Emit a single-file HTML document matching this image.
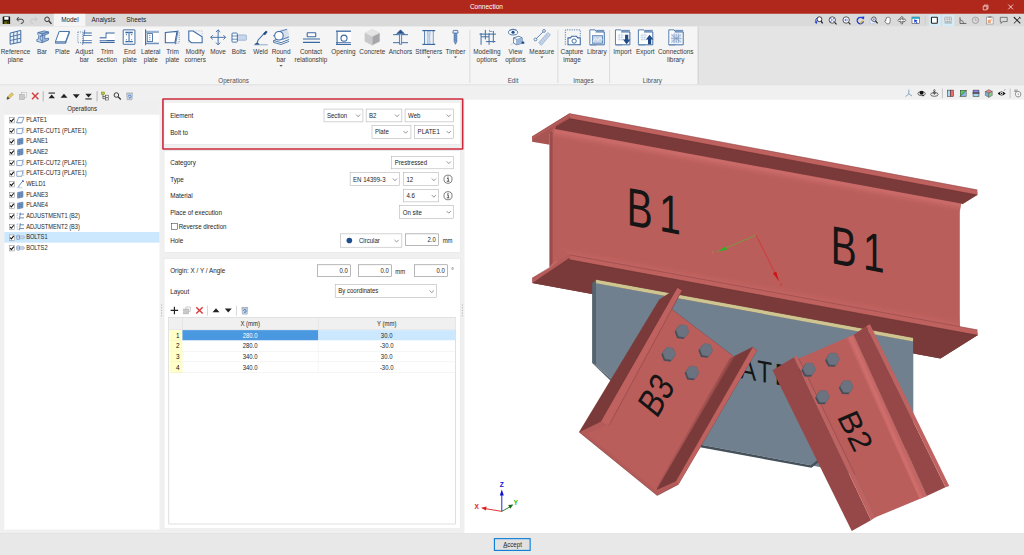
<!DOCTYPE html>
<html lang="en"><head><meta charset="utf-8"><title>Connection</title>
<style>
html,body{margin:0;padding:0;background:#f0f0f0;overflow:hidden;width:1024px;height:555px}
#root{position:absolute;left:0;top:0;width:1920px;height:1041px;transform:scale(0.533333,0.533333);transform-origin:0 0;
 font-family:"Liberation Sans",sans-serif;font-size:12px;color:#1a1a1a;background:#f0f0f0;overflow:hidden}
#root div{position:absolute;box-sizing:border-box;white-space:nowrap}
#root svg{position:absolute;overflow:visible}
.t{color:#1e1e1e}
.combo{background:#fff;border:1px solid #adadad}
.inp{background:#fff;border:1px solid #7a7a7a}
.panel{background:#fff;border:1px solid #dedede}
</style></head>
<body>
<div id="root">
<div style="left:0.0px;top:0.0px;width:1920.0px;height:26.0px;background:#b0281c"></div>
<div class="t" style="left:712.0px;top:3.0px;width:400px;height:20px;line-height:20px;text-align:center;transform:scaleX(1.02);transform-origin:50% 50%;color:#fff">Connection</div>
<svg style="left:1840px;top:5px" width="70" height="16" viewBox="0 0 70 16"><path d="M3.5 6.5h7v7h-7z M5.5 6.5v-2h7v7h-2" fill="none" stroke="#fff" stroke-width="1.2"/><path d="M50.5 3.5l9 9 M59.5 3.5l-9 9" stroke="#fff" stroke-width="1.4"/></svg>
<div style="left:0.0px;top:26.0px;width:1920.0px;height:24.0px;background:#dadada"></div>
<div style="left:101.0px;top:26.0px;width:59.0px;height:25.0px;background:#f5f5f5"></div>
<div class="t" style="left:-69.0px;top:28.0px;width:400px;height:20px;line-height:20px;text-align:center;transform:scaleX(1.0);transform-origin:50% 50%;">Model</div>
<div class="t" style="left:-6.0px;top:28.0px;width:400px;height:20px;line-height:20px;text-align:center;transform:scaleX(1.0);transform-origin:50% 50%;">Analysis</div>
<div class="t" style="left:55.5px;top:28.0px;width:400px;height:20px;line-height:20px;text-align:center;transform:scaleX(1.0);transform-origin:50% 50%;">Sheets</div>
<div style="left:0.0px;top:48.5px;width:1920.0px;height:110.5px;background:#e4e4e4"></div>
<div style="left:0.0px;top:50.0px;width:1309.0px;height:109.0px;background:#f5f5f5"></div>
<div style="left:0.0px;top:158.0px;width:1920.0px;height:1.5px;background:#e2e2e2"></div>
<div style="left:880.0px;top:56.0px;width:1.5px;height:100.0px;background:#dcdcdc"></div>
<div style="left:1045.0px;top:56.0px;width:1.5px;height:100.0px;background:#dcdcdc"></div>
<div style="left:1142.0px;top:56.0px;width:1.5px;height:100.0px;background:#dcdcdc"></div>
<div style="left:1308.0px;top:50.0px;width:1.5px;height:108.0px;background:#cfcfcf"></div>
<svg style="left:13.0px;top:54px" width="32" height="32" viewBox="0 0 32 32"><path d="M6 8L26 3V25L6 29Z" fill="#e9eff7" stroke="#3a68a2" stroke-width="1.8" /><path d="M12.7 6.3V27.6 M19.3 4.7V26.4 M6 15L26 10.3 M6 22L26 17.6" fill="none" stroke="#3a68a2" stroke-width="1.6" /></svg>
<div class="t" style="left:-31.0px;top:87.0px;width:120px;height:20px;line-height:20px;text-align:center;transform:scaleX(1.0);transform-origin:50% 50%;color:#3a3a3a">Reference</div>
<div class="t" style="left:-31.0px;top:102.5px;width:120px;height:20px;line-height:20px;text-align:center;transform:scaleX(1.0);transform-origin:50% 50%;color:#3a3a3a">plane</div>
<svg style="left:62.8px;top:54px" width="32" height="32" viewBox="0 0 32 32"><path d="M8 7L20 4L28 6L16 9.5Z" fill="#9db6d6" stroke="#3a68a2" stroke-width="1.4" /><path d="M16 9.5L28 6V9L21 11.5V19L28 17.5V21L16 26Z" fill="#9db6d6" stroke="#3a68a2" stroke-width="1.4" /><path d="M8 7L16 9.5V13L12.5 14V21L16 22V26L6 23.5V20L9.5 19V12.5L8 11Z" fill="#c9d7ea" stroke="#3a68a2" stroke-width="1.4" /><path d="M12.5 14L21 11.5" fill="none" stroke="#3a68a2" stroke-width="1.2" /></svg>
<div class="t" style="left:18.8px;top:87.0px;width:120px;height:20px;line-height:20px;text-align:center;transform:scaleX(1.0);transform-origin:50% 50%;color:#3a3a3a">Bar</div>
<svg style="left:101.0px;top:54px" width="32" height="32" viewBox="0 0 32 32"><path d="M10 5H29L22 24H3Z" fill="#fff" stroke="#3a68a2" stroke-width="1.8" /><path d="M3 24V27H22V24 M22 27L29 8V5" fill="#9db6d6" stroke="#3a68a2" stroke-width="1.5" /></svg>
<div class="t" style="left:57.0px;top:87.0px;width:120px;height:20px;line-height:20px;text-align:center;transform:scaleX(1.0);transform-origin:50% 50%;color:#3a3a3a">Plate</div>
<svg style="left:142.0px;top:54px" width="32" height="32" viewBox="0 0 32 32"><path d="M4 6H13V26H4Z" fill="none" stroke="#3a68a2" stroke-width="1.3" stroke-dasharray="2 2"/><path d="M14 8H30 M14 13H30 M14 22H30 M14 26H30" fill="none" stroke="#3a68a2" stroke-width="2" /><path d="M17 2L13 30" fill="none" stroke="#3a68a2" stroke-width="1.6" /><rect x="15" y="13.5" width="15" height="8" fill="#fff"/></svg>
<div class="t" style="left:98.0px;top:87.0px;width:120px;height:20px;line-height:20px;text-align:center;transform:scaleX(1.0);transform-origin:50% 50%;color:#3a3a3a">Adjust</div>
<div class="t" style="left:98.0px;top:102.5px;width:120px;height:20px;line-height:20px;text-align:center;transform:scaleX(1.0);transform-origin:50% 50%;color:#3a3a3a">bar</div>
<svg style="left:184.6px;top:54px" width="32" height="32" viewBox="0 0 32 32"><path d="M2 17H14V8H30" fill="none" stroke="#3a68a2" stroke-width="2" /><path d="M2 22H30 M2 25.5H30" fill="none" stroke="#3a68a2" stroke-width="2" /><rect x="15" y="10" width="15" height="11" fill="#fff"/><rect x="3" y="18.5" width="12" height="3" fill="#fff"/></svg>
<div class="t" style="left:140.6px;top:87.0px;width:120px;height:20px;line-height:20px;text-align:center;transform:scaleX(1.0);transform-origin:50% 50%;color:#3a3a3a">Trim</div>
<div class="t" style="left:140.6px;top:102.5px;width:120px;height:20px;line-height:20px;text-align:center;transform:scaleX(1.0);transform-origin:50% 50%;color:#3a3a3a">section</div>
<svg style="left:227.3px;top:54px" width="32" height="32" viewBox="0 0 32 32"><rect x="4" y="2" width="22" height="27" rx="0.5" fill="#fff" stroke="#3a68a2" stroke-width="1.8"/><path d="M8 7H22 M8 24H22" fill="none" stroke="#3a68a2" stroke-width="2.6" /><path d="M15 7V24" fill="none" stroke="#7f9cc4" stroke-width="3" /><circle cx="10" cy="11" r="1.1" fill="#3a68a2"/><circle cx="20" cy="11" r="1.1" fill="#3a68a2"/><circle cx="10" cy="20.5" r="1.1" fill="#3a68a2"/><circle cx="20" cy="20.5" r="1.1" fill="#3a68a2"/></svg>
<div class="t" style="left:183.3px;top:87.0px;width:120px;height:20px;line-height:20px;text-align:center;transform:scaleX(1.0);transform-origin:50% 50%;color:#3a3a3a">End</div>
<div class="t" style="left:183.3px;top:102.5px;width:120px;height:20px;line-height:20px;text-align:center;transform:scaleX(1.0);transform-origin:50% 50%;color:#3a3a3a">plate</div>
<svg style="left:266.7px;top:54px" width="32" height="32" viewBox="0 0 32 32"><rect x="1" y="1" width="30" height="30" fill="#fff"/><path d="M6 1V31" fill="none" stroke="#3a68a2" stroke-width="2" /><path d="M6 6H31 M6 27H31" fill="none" stroke="#3a68a2" stroke-width="2" /><path d="M7 4H31 M7 29H31" fill="none" stroke="#9db6d6" stroke-width="1" /><rect x="9" y="9" width="10" height="15" fill="#fff" stroke="#3a68a2" stroke-width="1.6"/><circle cx="14" cy="12.5" r="1.1" fill="#3a68a2"/><circle cx="14" cy="16.5" r="1.1" fill="#3a68a2"/><circle cx="14" cy="20.5" r="1.1" fill="#3a68a2"/></svg>
<div class="t" style="left:222.7px;top:87.0px;width:120px;height:20px;line-height:20px;text-align:center;transform:scaleX(1.0);transform-origin:50% 50%;color:#3a3a3a">Lateral</div>
<div class="t" style="left:222.7px;top:102.5px;width:120px;height:20px;line-height:20px;text-align:center;transform:scaleX(1.0);transform-origin:50% 50%;color:#3a3a3a">plate</div>
<svg style="left:307.4px;top:54px" width="32" height="32" viewBox="0 0 32 32"><path d="M3 7L25 5L21 26H3Z" fill="#fff" stroke="#3a68a2" stroke-width="2" /><path d="M27 3L22 29" fill="none" stroke="#3a68a2" stroke-width="1.5" /><path d="M29 7V26" fill="none" stroke="#3a68a2" stroke-width="1.3" stroke-dasharray="2 2"/><path d="M22 27H29" fill="none" stroke="#3a68a2" stroke-width="1.2" stroke-dasharray="2 2"/></svg>
<div class="t" style="left:263.4px;top:87.0px;width:120px;height:20px;line-height:20px;text-align:center;transform:scaleX(1.0);transform-origin:50% 50%;color:#3a3a3a">Trim</div>
<div class="t" style="left:263.4px;top:102.5px;width:120px;height:20px;line-height:20px;text-align:center;transform:scaleX(1.0);transform-origin:50% 50%;color:#3a3a3a">plate</div>
<svg style="left:350.0px;top:54px" width="32" height="32" viewBox="0 0 32 32"><path d="M4 4H12L29 15V26H9L4 22Z" fill="#fff" stroke="#3a68a2" stroke-width="2" /><path d="M12 4H29V15" fill="none" stroke="#7f9cc4" stroke-width="1" stroke-dasharray="1.5 1.5"/><path d="M4 22V26H9" fill="none" stroke="#7f9cc4" stroke-width="1" stroke-dasharray="1.5 1.5"/></svg>
<div class="t" style="left:306.0px;top:87.0px;width:120px;height:20px;line-height:20px;text-align:center;transform:scaleX(1.0);transform-origin:50% 50%;color:#3a3a3a">Modify</div>
<div class="t" style="left:306.0px;top:102.5px;width:120px;height:20px;line-height:20px;text-align:center;transform:scaleX(1.0);transform-origin:50% 50%;color:#3a3a3a">corners</div>
<svg style="left:392.8px;top:54px" width="32" height="32" viewBox="0 0 32 32"><path d="M16 2V30 M2 16H30 M12 6L16 2L20 6 M12 26L16 30L20 26 M6 12L2 16L6 20 M26 12L30 16L26 20" fill="none" stroke="#3a68a2" stroke-width="1.7" /></svg>
<div class="t" style="left:348.8px;top:87.0px;width:120px;height:20px;line-height:20px;text-align:center;transform:scaleX(1.0);transform-origin:50% 50%;color:#3a3a3a">Move</div>
<svg style="left:431.7px;top:54px" width="32" height="32" viewBox="0 0 32 32"><rect x="13" y="11.5" width="17" height="10" rx="1.5" fill="#c9d7ea" stroke="#8aa5cb" stroke-width="1.3"/><rect x="3" y="8" width="10" height="17" rx="1.5" fill="#fff" stroke="#3a68a2" stroke-width="1.7"/><path d="M3 13.5H13 M3 19.5H13" fill="none" stroke="#3a68a2" stroke-width="1.4" /></svg>
<div class="t" style="left:387.7px;top:87.0px;width:120px;height:20px;line-height:20px;text-align:center;transform:scaleX(1.0);transform-origin:50% 50%;color:#3a3a3a">Bolts</div>
<svg style="left:472.4px;top:54px" width="32" height="32" viewBox="0 0 32 32"><path d="M22 9L27 4L29 6L24.5 11.5Z" fill="#1f4a86" stroke="#1f4a86" stroke-width="1.4" /><path d="M23 9L12 21L10 27" fill="none" stroke="#3a68a2" stroke-width="1.9" /><path d="M4 30H30" fill="none" stroke="#7f9cc4" stroke-width="1.6" /><path d="M6 29Q10 24 14 29Z" fill="#1f4a86" stroke="#1f4a86" stroke-width="1" /></svg>
<div class="t" style="left:428.4px;top:87.0px;width:120px;height:20px;line-height:20px;text-align:center;transform:scaleX(1.0);transform-origin:50% 50%;color:#3a3a3a">Weld</div>
<svg style="left:511.0px;top:54px" width="32" height="32" viewBox="0 0 32 32"><path d="M2 22L16 26L31 20 M2 25.5L16 29.5L31 23.5 M2 22V25.5" fill="none" stroke="#3a68a2" stroke-width="1.6" /><path d="M2 22L15 17" fill="none" stroke="#3a68a2" stroke-width="1.4" /><path d="M13 2L28 0L31 9L30 18L16 22Z" fill="#d6e0ee"/><circle cx="12" cy="13" r="8" fill="#fff" stroke="#3a68a2" stroke-width="2"/><path d="M1 13H4" fill="none" stroke="#3a68a2" stroke-width="1.5" /><path d="M14 5L27 1 M18 20L31 15" fill="none" stroke="#3a68a2" stroke-width="1.5" /></svg>
<div class="t" style="left:467.0px;top:87.0px;width:120px;height:20px;line-height:20px;text-align:center;transform:scaleX(1.0);transform-origin:50% 50%;color:#3a3a3a">Round</div>
<div class="t" style="left:467.0px;top:102.5px;width:120px;height:20px;line-height:20px;text-align:center;transform:scaleX(1.0);transform-origin:50% 50%;color:#3a3a3a">bar</div>
<svg style="left:523.0px;top:121px" width="8" height="5" viewBox="0 0 8 5"><path d="M1 1l3 3 3-3z" fill="#555"/></svg>
<svg style="left:567.0px;top:54px" width="32" height="32" viewBox="0 0 32 32"><rect x="9" y="7.5" width="16" height="7.5" rx="1" fill="#fff" stroke="#3a68a2" stroke-width="2"/><path d="M1 19H33 M1 25.5H33" fill="none" stroke="#3a68a2" stroke-width="2" /></svg>
<div class="t" style="left:523.0px;top:87.0px;width:120px;height:20px;line-height:20px;text-align:center;transform:scaleX(1.0);transform-origin:50% 50%;color:#3a3a3a">Contact</div>
<div class="t" style="left:523.0px;top:102.5px;width:120px;height:20px;line-height:20px;text-align:center;transform:scaleX(1.0);transform-origin:50% 50%;color:#3a3a3a">relationship</div>
<svg style="left:628.0px;top:54px" width="32" height="32" viewBox="0 0 32 32"><rect x="3" y="5" width="27" height="24" fill="#fff"/><path d="M2 4.5H30" fill="none" stroke="#3a68a2" stroke-width="2.4" /><path d="M4 5V29 M2 26H30 M2 29.5H30" fill="none" stroke="#3a68a2" stroke-width="2" /><circle cx="17" cy="17.5" r="5.7" fill="#fff" stroke="#3a68a2" stroke-width="2"/></svg>
<div class="t" style="left:584.0px;top:87.0px;width:120px;height:20px;line-height:20px;text-align:center;transform:scaleX(1.0);transform-origin:50% 50%;color:#3a3a3a">Opening</div>
<svg style="left:682.0px;top:54px" width="32" height="32" viewBox="0 0 32 32"><path d="M16 1L30 8L16 15L2 8Z" fill="#e4e4e4" stroke="#cfcfcf" stroke-width="0.6"/><path d="M2 8L16 15V31L2 24Z" fill="#c9c9cc" stroke="#cfcfcf" stroke-width="0.6"/><path d="M30 8L16 15V31L30 24Z" fill="#a6a6aa" stroke="#cfcfcf" stroke-width="0.6"/></svg>
<div class="t" style="left:638.0px;top:87.0px;width:120px;height:20px;line-height:20px;text-align:center;transform:scaleX(1.0);transform-origin:50% 50%;color:#3a3a3a">Concrete</div>
<svg style="left:735.0px;top:54px" width="32" height="32" viewBox="0 0 32 32"><path d="M16 2L23 9H9Z" fill="#1f4a86" stroke="#1f4a86" stroke-width="1" /><path d="M2 11H30 M2 26H30" fill="none" stroke="#3a68a2" stroke-width="1.8" /><path d="M14 11V29H18V11" fill="#e9eff7" stroke="#3a68a2" stroke-width="1.5" /><path d="M8 11L16 4L24 11" fill="none" stroke="#3a68a2" stroke-width="1.6" /></svg>
<div class="t" style="left:691.0px;top:87.0px;width:120px;height:20px;line-height:20px;text-align:center;transform:scaleX(1.0);transform-origin:50% 50%;color:#3a3a3a">Anchors</div>
<svg style="left:788.0px;top:54px" width="32" height="32" viewBox="0 0 32 32"><path d="M4 3.5H28 M4 29H28" fill="none" stroke="#3a68a2" stroke-width="2.4" /><path d="M8 4V29 M24 4V29" fill="none" stroke="#3a68a2" stroke-width="1.6" /><path d="M13 5Q15.5 16 13 28H19Q16.5 16 19 5Z" fill="#c9d7ea" stroke="#7f9cc4" stroke-width="1" /><rect x="8.8" y="5" width="3.6" height="23" fill="#e9eff7"/><rect x="19.6" y="5" width="3.6" height="23" fill="#e9eff7"/></svg>
<div class="t" style="left:744.0px;top:87.0px;width:120px;height:20px;line-height:20px;text-align:center;transform:scaleX(1.0);transform-origin:50% 50%;color:#3a3a3a">Stiffeners</div>
<svg style="left:800.0px;top:105px" width="8" height="5" viewBox="0 0 8 5"><path d="M1 1l3 3 3-3z" fill="#555"/></svg>
<svg style="left:838.0px;top:54px" width="32" height="32" viewBox="0 0 32 32"><path d="M12 3H20L21 8H11Z" fill="#e9eff7" stroke="#3a68a2" stroke-width="1.5" /><path d="M13.5 9H18.5V24L16 29L13.5 24Z" fill="#7f9cc4" stroke="#3a68a2" stroke-width="1.2" /><path d="M13.5 12L18.5 14 M13.5 16L18.5 18 M13.5 20L18.5 22" fill="none" stroke="#3a68a2" stroke-width="1" /></svg>
<div class="t" style="left:794.0px;top:87.0px;width:120px;height:20px;line-height:20px;text-align:center;transform:scaleX(1.0);transform-origin:50% 50%;color:#3a3a3a">Timber</div>
<svg style="left:850.0px;top:105px" width="8" height="5" viewBox="0 0 8 5"><path d="M1 1l3 3 3-3z" fill="#555"/></svg>
<svg style="left:897.0px;top:54px" width="32" height="32" viewBox="0 0 32 32"><path d="M5 8V30 M5 15H20 M20 8V30 M13 2V20 M2 10H33 M28 4V26 M14 24H32" fill="none" stroke="#3a68a2" stroke-width="1.8" /><path d="M21 2V5H26" fill="none" stroke="#3a68a2" stroke-width="1.2" /></svg>
<div class="t" style="left:853.0px;top:87.0px;width:120px;height:20px;line-height:20px;text-align:center;transform:scaleX(1.0);transform-origin:50% 50%;color:#3a3a3a">Modelling</div>
<div class="t" style="left:853.0px;top:102.5px;width:120px;height:20px;line-height:20px;text-align:center;transform:scaleX(1.0);transform-origin:50% 50%;color:#3a3a3a">options</div>
<svg style="left:950.5px;top:54px" width="32" height="32" viewBox="0 0 32 32"><ellipse cx="11" cy="6.5" rx="8.5" ry="5" fill="#fff" stroke="#3a68a2" stroke-width="1.6"/><circle cx="11" cy="6.5" r="3" fill="#1f4a86"/><path d="M4 3Q11 -2 18 3" fill="none" stroke="#3a68a2" stroke-width="1.2" /><path d="M12 17L22 14L28 17V27L18 30L12 27Z" fill="#fff" stroke="#3a68a2" stroke-width="1.5" /><path d="M18 20V30 M12 17L18 20L28 17" fill="none" stroke="#3a68a2" stroke-width="1.3" /><path d="M18 20L28 17V27L18 30Z" fill="#9db6d6"/><rect x="27" y="24" width="5" height="4" fill="#1f4a86"/><path d="M12 27L6 30" fill="none" stroke="#bbb" stroke-width="1" /></svg>
<div class="t" style="left:906.5px;top:87.0px;width:120px;height:20px;line-height:20px;text-align:center;transform:scaleX(1.0);transform-origin:50% 50%;color:#3a3a3a">View</div>
<div class="t" style="left:906.5px;top:102.5px;width:120px;height:20px;line-height:20px;text-align:center;transform:scaleX(1.0);transform-origin:50% 50%;color:#3a3a3a">options</div>
<svg style="left:999.8px;top:54px" width="32" height="32" viewBox="0 0 32 32"><path d="M10 26L27 7L32 11L15 31Z" fill="#c9d7ea" stroke="#8aa5cb" stroke-width="1.3" /><path d="M13 25L15 27 M16 22L18 24 M19 19L21 21 M22 15L24 17 M25 12L27 14" fill="none" stroke="#6f8fbd" stroke-width="1" /><path d="M4 20L20 4" fill="none" stroke="#3a68a2" stroke-width="1.5" /><circle cx="4" cy="20" r="2.6" fill="#fff" stroke="#3a68a2" stroke-width="1.5"/><circle cx="20" cy="4" r="2.6" fill="#fff" stroke="#3a68a2" stroke-width="1.5"/></svg>
<div class="t" style="left:955.8px;top:87.0px;width:120px;height:20px;line-height:20px;text-align:center;transform:scaleX(1.0);transform-origin:50% 50%;color:#3a3a3a">Measure</div>
<svg style="left:1011.8px;top:105px" width="8" height="5" viewBox="0 0 8 5"><path d="M1 1l3 3 3-3z" fill="#555"/></svg>
<svg style="left:1056.5px;top:54px" width="32" height="32" viewBox="0 0 32 32"><path d="M3 30V2H31V14" fill="none" stroke="#3a68a2" stroke-width="1.5" stroke-dasharray="2.4 2"/><path d="M8 17H13L15 14H24L26 17H31V30H8Z" fill="#fff" stroke="#3a68a2" stroke-width="2" /><circle cx="19.5" cy="23" r="4" fill="#fff" stroke="#3a68a2" stroke-width="1.8"/></svg>
<div class="t" style="left:1012.5px;top:87.0px;width:120px;height:20px;line-height:20px;text-align:center;transform:scaleX(1.0);transform-origin:50% 50%;color:#3a3a3a">Capture</div>
<div class="t" style="left:1012.5px;top:102.5px;width:120px;height:20px;line-height:20px;text-align:center;transform:scaleX(1.0);transform-origin:50% 50%;color:#3a3a3a">image</div>
<svg style="left:1103.0px;top:54px" width="32" height="32" viewBox="0 0 32 32"><path d="M3 2H13L15 5V30H3Z" fill="#fff" stroke="#3a68a2" stroke-width="1.6" /><rect x="15" y="2" width="15" height="3" fill="#6f8fbd"/><path d="M15 6H30V30H3" fill="#fff" stroke="#3a68a2" stroke-width="1.8" /><rect x="8" y="13" width="19" height="14" fill="#c9d7ea" stroke="#3a68a2" stroke-width="1.3"/><path d="M8 24L14 18L18 22L22 17L27 21" fill="none" stroke="#fff" stroke-width="1.3" /></svg>
<div class="t" style="left:1059.0px;top:87.0px;width:120px;height:20px;line-height:20px;text-align:center;transform:scaleX(1.0);transform-origin:50% 50%;color:#3a3a3a">Library</div>
<svg style="left:1151.0px;top:54px" width="32" height="32" viewBox="0 0 32 32"><path d="M3 2H13L15 5V30H3Z" fill="#fff" stroke="#3a68a2" stroke-width="1.6" /><rect x="15" y="2" width="15" height="3" fill="#6f8fbd"/><path d="M15 6H30V30H3" fill="#fff" stroke="#3a68a2" stroke-width="1.8" /><path d="M7 12H20 M7 16H18 M7 20H20 M10 9V23 M15 9V23" fill="none" stroke="#9db6d6" stroke-width="0.8" /><path d="M21 11H27V20H31L24 29L17 20H21Z" fill="#1f4a86"/></svg>
<div class="t" style="left:1107.0px;top:87.0px;width:120px;height:20px;line-height:20px;text-align:center;transform:scaleX(1.0);transform-origin:50% 50%;color:#3a3a3a">Import</div>
<svg style="left:1194.0px;top:54px" width="32" height="32" viewBox="0 0 32 32"><path d="M3 2H13L15 5V30H3Z" fill="#fff" stroke="#3a68a2" stroke-width="1.6" /><rect x="15" y="2" width="15" height="3" fill="#6f8fbd"/><path d="M15 6H30V30H3" fill="#fff" stroke="#3a68a2" stroke-width="1.8" /><path d="M7 12H20 M7 16H18 M7 20H20 M10 9V23 M15 9V23" fill="none" stroke="#9db6d6" stroke-width="0.8" /><path d="M21 29H27V20H31L24 11L17 20H21Z" fill="#1f4a86"/></svg>
<div class="t" style="left:1150.0px;top:87.0px;width:120px;height:20px;line-height:20px;text-align:center;transform:scaleX(1.0);transform-origin:50% 50%;color:#3a3a3a">Export</div>
<svg style="left:1251.0px;top:54px" width="32" height="32" viewBox="0 0 32 32"><path d="M3 2H13L15 5V30H3Z" fill="#fff" stroke="#3a68a2" stroke-width="1.6" /><rect x="15" y="2" width="15" height="3" fill="#6f8fbd"/><path d="M15 6H30V30H3" fill="#fff" stroke="#3a68a2" stroke-width="1.8" /><rect x="7" y="9" width="20" height="18" fill="#dbe5f2"/><path d="M17 9V27 M13 9V27 M21 9V27 M7 18H27 M8 11L26 25 M26 11L8 25" fill="none" stroke="#6f8fbd" stroke-width="1.1" /></svg>
<div class="t" style="left:1207.0px;top:87.0px;width:120px;height:20px;line-height:20px;text-align:center;transform:scaleX(1.0);transform-origin:50% 50%;color:#3a3a3a">Connections</div>
<div class="t" style="left:1207.0px;top:102.5px;width:120px;height:20px;line-height:20px;text-align:center;transform:scaleX(1.0);transform-origin:50% 50%;color:#3a3a3a">library</div>
<div class="t" style="left:378.0px;top:142.0px;width:120px;height:20px;line-height:20px;text-align:center;transform:scaleX(0.98);transform-origin:50% 50%;color:#505050">Operations</div>
<div class="t" style="left:902.0px;top:142.0px;width:120px;height:20px;line-height:20px;text-align:center;transform:scaleX(0.98);transform-origin:50% 50%;color:#505050">Edit</div>
<div class="t" style="left:1033.6px;top:142.0px;width:120px;height:20px;line-height:20px;text-align:center;transform:scaleX(0.98);transform-origin:50% 50%;color:#505050">Images</div>
<div class="t" style="left:1163.4px;top:142.0px;width:120px;height:20px;line-height:20px;text-align:center;transform:scaleX(0.98);transform-origin:50% 50%;color:#505050">Library</div>
<svg style="left:3.8px;top:30px" width="16" height="16" viewBox="0 0 16 16"><rect x="1" y="1" width="14" height="14" rx="1" fill="#111"/><rect x="4" y="2" width="8" height="5" fill="#fff"/><rect x="4" y="10" width="8" height="5" fill="#6b6b00"/><rect x="9" y="11" width="2" height="3" fill="#111"/></svg>
<svg style="left:29.9px;top:30px" width="16" height="16" viewBox="0 0 16 16"><path d="M5 2L1.5 6L5 10 M2 6H10Q14 6 14 10Q14 14 9 14" fill="none" stroke="#333" stroke-width="1.8" /></svg>
<svg style="left:55.4px;top:30px" width="16" height="16" viewBox="0 0 16 16"><path d="M11 2L14.5 6L11 10 M14 6H6Q2 6 2 10Q2 14 7 14" fill="none" stroke="#c2c2c2" stroke-width="1.6" /></svg>
<svg style="left:82.0px;top:30px" width="16" height="16" viewBox="0 0 16 16"><circle cx="6.2" cy="6.2" r="4.3" fill="none" stroke="#333" stroke-width="1.8"/><path d="M9.5 9.5L14.5 14.5" fill="none" stroke="#333" stroke-width="2.4" /></svg>
<div style="left:1741.5px;top:28.0px;width:22.0px;height:21.0px;background:#d4ecf7"></div>
<div style="left:1767.0px;top:28.0px;width:21.5px;height:21.0px;background:#d4ecf7"></div>
<svg style="left:1527.0px;top:29.5px" width="16" height="16" viewBox="0 0 16 16"><circle cx="9.5" cy="6" r="4.5" fill="#fff" stroke="#222" stroke-width="1.6"/><path d="M12.5 9.5L15.5 14" fill="none" stroke="#222" stroke-width="2.4" /><path d="M6 3Q1 5 3 12" fill="none" stroke="#1b3fd6" stroke-width="1.8" /><path d="M0.5 10.5L6 10.5L3.5 15.5Z" fill="#1b3fd6"/></svg>
<svg style="left:1553.0px;top:29.5px" width="16" height="16" viewBox="0 0 16 16"><circle cx="7.5" cy="7.5" r="6" fill="#fff" stroke="#222" stroke-width="1.4"/><path d="M12 12L15.5 15.5" fill="none" stroke="#222" stroke-width="2" /><path d="M4 4L11 11 M11 4L4 11" fill="none" stroke="#1b3fd6" stroke-width="1.6" /><circle cx="7.5" cy="7.5" r="1.4" fill="#fff"/></svg>
<svg style="left:1579.0px;top:29.5px" width="16" height="16" viewBox="0 0 16 16"><circle cx="7.5" cy="7.5" r="6" fill="#fff" stroke="#222" stroke-width="1.4"/><path d="M12 12L15.5 15.5" fill="none" stroke="#222" stroke-width="2" /><path d="M5 7.5H11 M5 7.5L7.5 5 M5 7.5L7.5 10" fill="none" stroke="#1b3fd6" stroke-width="1.2" /></svg>
<svg style="left:1604.5px;top:29.5px" width="16" height="16" viewBox="0 0 16 16"><path d="M13 5A6 6 0 1 0 14 10" fill="none" stroke="#1b3fd6" stroke-width="2.4" /><path d="M10 1.5L15.5 1L15 7Z" fill="#1b3fd6"/><path d="M8 14L13 9" fill="none" stroke="#d8b040" stroke-width="2.5" /></svg>
<svg style="left:1630.0px;top:29.5px" width="16" height="16" viewBox="0 0 16 16"><rect x="1.5" y="5.5" width="8" height="9" fill="#e6ecff" stroke="#8aa0e0" stroke-dasharray="1.5 1"/><circle cx="8.5" cy="6" r="4.2" fill="#fff" stroke="#222" stroke-width="1.4"/><path d="M11.5 9L15.5 14" fill="none" stroke="#222" stroke-width="2.2" /><circle cx="8.5" cy="6" r="1.8" fill="#6f8be0"/></svg>
<svg style="left:1657.0px;top:29.5px" width="16" height="16" viewBox="0 0 16 16"><path d="M4 9V5.5Q4 4.3 5.2 4.5V3Q6.5 1.5 7.5 3Q9 1.5 10 3.2Q11.5 2.5 12 4.5V10Q12 15 8 15Q5 15 2 10Q2 8 4 9Z" fill="#fff" stroke="#333" stroke-width="1.1" /></svg>
<svg style="left:1683.0px;top:29.5px" width="16" height="16" viewBox="0 0 16 16"><path d="M8 0.5L10.5 3.5H9.3V6.3H12.5V5L15.5 8L12.5 11V9.7H9.3V12.5H10.5L8 15.5L5.5 12.5H6.7V9.7H3.5V11L0.5 8L3.5 5V6.3H6.7V3.5H5.5Z" fill="#fff" stroke="#222" stroke-width="1.1" /></svg>
<svg style="left:1708.6px;top:29.5px" width="16" height="16" viewBox="0 0 16 16"><rect x="1" y="2" width="14" height="12" fill="#fff" stroke="#333"/><rect x="1" y="2" width="14" height="3.2" fill="#18a8c8"/><path d="M5 6L12 9L9 10L11.5 13.5L10 14.5L7.7 11L5.5 13Z" fill="#1b3fd6"/></svg>
<svg style="left:1743.7px;top:29.5px" width="16" height="16" viewBox="0 0 16 16"><rect x="2.5" y="2.5" width="11" height="11" rx="1" fill="#fff" stroke="#222" stroke-width="2"/></svg>
<svg style="left:1769.5px;top:29.5px" width="16" height="16" viewBox="0 0 16 16"><rect x="1.5" y="2" width="13" height="8" fill="#e8e8e8" stroke="#999"/><path d="M1.5 6H14.5 M6 2V10 M10.5 2V10" fill="none" stroke="#999" stroke-width="0.9" /><path d="M1 13H15" fill="none" stroke="#888" stroke-width="1.4" /></svg>
<svg style="left:1796.7px;top:29.5px" width="16" height="16" viewBox="0 0 16 16"><path d="M3 2V14H15" fill="none" stroke="#444" stroke-width="1.4" /><path d="M3 7Q9 7.5 10 14" fill="none" stroke="#444" stroke-width="1.2" /></svg>
<svg style="left:1821.0px;top:29.5px" width="16" height="16" viewBox="0 0 16 16"><circle cx="8" cy="8" r="6" fill="none" stroke="#8a8a8a" stroke-width="1.3"/><path d="M8 8H12 M8 8V4.5" fill="none" stroke="#8a8a8a" stroke-width="1" /></svg>
<svg style="left:1847.8px;top:29.5px" width="16" height="16" viewBox="0 0 16 16"><rect x="2" y="2" width="12" height="13" fill="#fff" stroke="#777"/><rect x="5" y="0.5" width="6" height="3" fill="#888"/><rect x="4" y="7" width="6" height="6" fill="#f0a070"/><rect x="8" y="5" width="4.5" height="4.5" fill="#f6c8a8"/></svg>
<svg style="left:1874.0px;top:29.5px" width="16" height="16" viewBox="0 0 16 16"><path d="M1.5 2.5H14.5V10.5H6L3 14V10.5H1.5Z" fill="none" stroke="#444" stroke-width="1.2" /></svg>
<svg style="left:1899.3px;top:29.5px" width="16" height="16" viewBox="0 0 16 16"><path d="M2 2L14 14 M4 2L2 4" fill="none" stroke="#222" stroke-width="2" /><path d="M14 2L2 14 M11.5 1.5L14.5 4.5" fill="none" stroke="#222" stroke-width="1.8" /></svg>
<div style="left:1733.5px;top:29.0px;width:1.5px;height:18.0px;background:#c0c0c0"></div>
<svg style="left:11.3px;top:172px" width="16" height="16" viewBox="0 0 16 16"><path d="M2 14L3.5 9.5L11 2L14 5L6.5 12.5Z" fill="#f0d060" stroke="#8a7a30" stroke-width="1" /><path d="M2 14L3.5 9.5L6.5 12.5Z" fill="#444" stroke="#444" stroke-width="0.8" /></svg>
<svg style="left:34.6px;top:172px" width="16" height="16" viewBox="0 0 16 16"><rect x="5.5" y="1.5" width="9" height="9" fill="#f4f4f4" stroke="#b0b0b0"/><rect x="1.5" y="5.5" width="9" height="9" fill="#c9c9c9" stroke="#a8a8a8"/></svg>
<svg style="left:57.6px;top:172px" width="16" height="16" viewBox="0 0 16 16"><path d="M2 2L14 14 M14 2L2 14" fill="none" stroke="#d83a3a" stroke-width="2.6" /></svg>
<svg style="left:89.0px;top:172px" width="16" height="16" viewBox="0 0 16 16"><path d="M2 2.5H14" fill="none" stroke="#222" stroke-width="2" /><path d="M8 5L14 12H2Z" fill="#222"/></svg>
<svg style="left:112.0px;top:172px" width="16" height="16" viewBox="0 0 16 16"><path d="M8 4L14.5 11.5H1.5Z" fill="#222"/></svg>
<svg style="left:135.0px;top:172px" width="16" height="16" viewBox="0 0 16 16"><path d="M8 12L14.5 4.5H1.5Z" fill="#222"/></svg>
<svg style="left:157.6px;top:172px" width="16" height="16" viewBox="0 0 16 16"><path d="M2 13.5H14" fill="none" stroke="#222" stroke-width="2" /><path d="M8 11L14 4H2Z" fill="#222"/></svg>
<svg style="left:189.4px;top:172px" width="16" height="16" viewBox="0 0 16 16"><rect x="1" y="0.5" width="6" height="5" fill="#b8c832" stroke="#707a10" stroke-width="0.8"/><path d="M4 6V13H9 M4 9H9" fill="none" stroke="#333" stroke-width="1.2" /><rect x="9" y="6.5" width="5.5" height="4" fill="#fff" stroke="#333"/><rect x="9" y="11.5" width="5.5" height="4" fill="#fff" stroke="#333"/></svg>
<svg style="left:212.0px;top:172px" width="16" height="16" viewBox="0 0 16 16"><circle cx="6.2" cy="6.2" r="4.3" fill="none" stroke="#333" stroke-width="1.8"/><path d="M9.5 9.5L14.5 14.5" fill="none" stroke="#333" stroke-width="2.4" /></svg>
<svg style="left:235.4px;top:172px" width="16" height="16" viewBox="0 0 16 16"><path d="M2.5 3.5H13.5L12.5 15H3.5Z" fill="#cfd6dd" stroke="#8d98a5"/><rect x="2" y="1.5" width="12" height="2.5" fill="#aeb8c4"/><path d="M5.5 9A2.6 2.6 0 1 1 8 11.6" fill="none" stroke="#2a6fd6" stroke-width="1.5"/><path d="M8 9.8L6.2 11.8L8.4 13" fill="#2a6fd6"/></svg>
<div style="left:80.0px;top:171.0px;width:1.5px;height:19.0px;background:#b8b8b8"></div>
<div style="left:181.0px;top:171.0px;width:1.5px;height:19.0px;background:#b8b8b8"></div>
<div style="left:8.0px;top:192.0px;width:291.0px;height:23.0px;background:#efefef"></div>
<div class="t" style="left:-46.5px;top:193.5px;width:400px;height:20px;line-height:20px;text-align:center;transform:scaleX(0.95);transform-origin:50% 50%;">Operations</div>
<div style="left:8.0px;top:215.0px;width:291.0px;height:777.5px;background:#fff"></div>
<svg style="left:17px;top:219.5px" width="11" height="11" viewBox="0 0 11 11"><rect x="0.5" y="0.5" width="10" height="10" fill="#fff" stroke="#8a8a8a"/><path d="M2 5.4l2.3 2.6 4.6-5.6" fill="none" stroke="#111" stroke-width="2"/></svg>
<svg style="left:30px;top:217px" width="16" height="16" viewBox="0 0 16 16"><path d="M5 3H15L11 13H1Z" fill="#fff" stroke="#4a74a8" stroke-width="1.3" /><path d="M1 13.7H11L15 3.7" fill="none" stroke="#9db6d6" stroke-width="1" /></svg>
<div class="t" style="left:49.0px;top:215.0px;width:400px;height:20px;line-height:20px;text-align:left;transform:scaleX(0.89);transform-origin:0 50%;">PLATE1</div>
<svg style="left:17px;top:239.5px" width="11" height="11" viewBox="0 0 11 11"><rect x="0.5" y="0.5" width="10" height="10" fill="#fff" stroke="#8a8a8a"/><path d="M2 5.4l2.3 2.6 4.6-5.6" fill="none" stroke="#111" stroke-width="2"/></svg>
<svg style="left:30px;top:237px" width="16" height="16" viewBox="0 0 16 16"><path d="M1.5 4.5L13 3.5L11 13.5H1.5Z" fill="#fff" stroke="#4a74a8" stroke-width="1.2" /><path d="M14.5 2V13" fill="none" stroke="#4a74a8" stroke-width="1" stroke-dasharray="1.5 1.5"/></svg>
<div class="t" style="left:49.0px;top:235.0px;width:400px;height:20px;line-height:20px;text-align:left;transform:scaleX(0.89);transform-origin:0 50%;">PLATE-CUT1 (PLATE1)</div>
<svg style="left:17px;top:259.5px" width="11" height="11" viewBox="0 0 11 11"><rect x="0.5" y="0.5" width="10" height="10" fill="#fff" stroke="#8a8a8a"/><path d="M2 5.4l2.3 2.6 4.6-5.6" fill="none" stroke="#111" stroke-width="2"/></svg>
<svg style="left:30px;top:257px" width="16" height="16" viewBox="0 0 16 16"><path d="M3 4L13 2V12.5L3 14.5Z" fill="#8fabd0" stroke="#4a74a8" stroke-width="1.2" /><path d="M6.3 3.3V13.8 M9.7 2.7V13.2 M3 7.5L13 5.5 M3 11L13 9" fill="none" stroke="#3a68a2" stroke-width="1" /></svg>
<div class="t" style="left:49.0px;top:255.0px;width:400px;height:20px;line-height:20px;text-align:left;transform:scaleX(0.89);transform-origin:0 50%;">PLANE1</div>
<svg style="left:17px;top:279.5px" width="11" height="11" viewBox="0 0 11 11"><rect x="0.5" y="0.5" width="10" height="10" fill="#fff" stroke="#8a8a8a"/><path d="M2 5.4l2.3 2.6 4.6-5.6" fill="none" stroke="#111" stroke-width="2"/></svg>
<svg style="left:30px;top:277px" width="16" height="16" viewBox="0 0 16 16"><path d="M3 4L13 2V12.5L3 14.5Z" fill="#8fabd0" stroke="#4a74a8" stroke-width="1.2" /><path d="M6.3 3.3V13.8 M9.7 2.7V13.2 M3 7.5L13 5.5 M3 11L13 9" fill="none" stroke="#3a68a2" stroke-width="1" /></svg>
<div class="t" style="left:49.0px;top:275.0px;width:400px;height:20px;line-height:20px;text-align:left;transform:scaleX(0.89);transform-origin:0 50%;">PLANE2</div>
<svg style="left:17px;top:299.5px" width="11" height="11" viewBox="0 0 11 11"><rect x="0.5" y="0.5" width="10" height="10" fill="#fff" stroke="#8a8a8a"/><path d="M2 5.4l2.3 2.6 4.6-5.6" fill="none" stroke="#111" stroke-width="2"/></svg>
<svg style="left:30px;top:297px" width="16" height="16" viewBox="0 0 16 16"><path d="M1.5 4.5L13 3.5L11 13.5H1.5Z" fill="#fff" stroke="#4a74a8" stroke-width="1.2" /><path d="M14.5 2V13" fill="none" stroke="#4a74a8" stroke-width="1" stroke-dasharray="1.5 1.5"/></svg>
<div class="t" style="left:49.0px;top:295.0px;width:400px;height:20px;line-height:20px;text-align:left;transform:scaleX(0.89);transform-origin:0 50%;">PLATE-CUT2 (PLATE1)</div>
<svg style="left:17px;top:319.5px" width="11" height="11" viewBox="0 0 11 11"><rect x="0.5" y="0.5" width="10" height="10" fill="#fff" stroke="#8a8a8a"/><path d="M2 5.4l2.3 2.6 4.6-5.6" fill="none" stroke="#111" stroke-width="2"/></svg>
<svg style="left:30px;top:317px" width="16" height="16" viewBox="0 0 16 16"><path d="M1.5 4.5L13 3.5L11 13.5H1.5Z" fill="#fff" stroke="#4a74a8" stroke-width="1.2" /><path d="M14.5 2V13" fill="none" stroke="#4a74a8" stroke-width="1" stroke-dasharray="1.5 1.5"/></svg>
<div class="t" style="left:49.0px;top:315.0px;width:400px;height:20px;line-height:20px;text-align:left;transform:scaleX(0.89);transform-origin:0 50%;">PLATE-CUT3 (PLATE1)</div>
<svg style="left:17px;top:339.5px" width="11" height="11" viewBox="0 0 11 11"><rect x="0.5" y="0.5" width="10" height="10" fill="#fff" stroke="#8a8a8a"/><path d="M2 5.4l2.3 2.6 4.6-5.6" fill="none" stroke="#111" stroke-width="2"/></svg>
<svg style="left:30px;top:337px" width="16" height="16" viewBox="0 0 16 16"><path d="M13 2L6 11L5 14" fill="none" stroke="#4a74a8" stroke-width="1.5" /><path d="M1.5 15H12" fill="none" stroke="#9db6d6" stroke-width="1.2" /><path d="M12 1.5L14.5 3.5" fill="none" stroke="#1f4a86" stroke-width="2" /></svg>
<div class="t" style="left:49.0px;top:335.0px;width:400px;height:20px;line-height:20px;text-align:left;transform:scaleX(0.89);transform-origin:0 50%;">WELD1</div>
<svg style="left:17px;top:359.5px" width="11" height="11" viewBox="0 0 11 11"><rect x="0.5" y="0.5" width="10" height="10" fill="#fff" stroke="#8a8a8a"/><path d="M2 5.4l2.3 2.6 4.6-5.6" fill="none" stroke="#111" stroke-width="2"/></svg>
<svg style="left:30px;top:357px" width="16" height="16" viewBox="0 0 16 16"><path d="M3 4L13 2V12.5L3 14.5Z" fill="#8fabd0" stroke="#4a74a8" stroke-width="1.2" /><path d="M6.3 3.3V13.8 M9.7 2.7V13.2 M3 7.5L13 5.5 M3 11L13 9" fill="none" stroke="#3a68a2" stroke-width="1" /></svg>
<div class="t" style="left:49.0px;top:355.0px;width:400px;height:20px;line-height:20px;text-align:left;transform:scaleX(0.89);transform-origin:0 50%;">PLANE3</div>
<svg style="left:17px;top:379.5px" width="11" height="11" viewBox="0 0 11 11"><rect x="0.5" y="0.5" width="10" height="10" fill="#fff" stroke="#8a8a8a"/><path d="M2 5.4l2.3 2.6 4.6-5.6" fill="none" stroke="#111" stroke-width="2"/></svg>
<svg style="left:30px;top:377px" width="16" height="16" viewBox="0 0 16 16"><path d="M3 4L13 2V12.5L3 14.5Z" fill="#8fabd0" stroke="#4a74a8" stroke-width="1.2" /><path d="M6.3 3.3V13.8 M9.7 2.7V13.2 M3 7.5L13 5.5 M3 11L13 9" fill="none" stroke="#3a68a2" stroke-width="1" /></svg>
<div class="t" style="left:49.0px;top:375.0px;width:400px;height:20px;line-height:20px;text-align:left;transform:scaleX(0.89);transform-origin:0 50%;">PLANE4</div>
<svg style="left:17px;top:399.5px" width="11" height="11" viewBox="0 0 11 11"><rect x="0.5" y="0.5" width="10" height="10" fill="#fff" stroke="#8a8a8a"/><path d="M2 5.4l2.3 2.6 4.6-5.6" fill="none" stroke="#111" stroke-width="2"/></svg>
<svg style="left:30px;top:397px" width="16" height="16" viewBox="0 0 16 16"><path d="M2 3H6.5V13H2Z" fill="none" stroke="#4a74a8" stroke-width="1" stroke-dasharray="1.5 1.5"/><path d="M7 4.5H15 M7 11.5H15" fill="none" stroke="#4a74a8" stroke-width="1.5" /><path d="M8.5 1.5L6.5 15" fill="none" stroke="#4a74a8" stroke-width="1.2" /></svg>
<div class="t" style="left:49.0px;top:395.0px;width:400px;height:20px;line-height:20px;text-align:left;transform:scaleX(0.89);transform-origin:0 50%;">ADJUSTMENT1 (B2)</div>
<svg style="left:17px;top:419.5px" width="11" height="11" viewBox="0 0 11 11"><rect x="0.5" y="0.5" width="10" height="10" fill="#fff" stroke="#8a8a8a"/><path d="M2 5.4l2.3 2.6 4.6-5.6" fill="none" stroke="#111" stroke-width="2"/></svg>
<svg style="left:30px;top:417px" width="16" height="16" viewBox="0 0 16 16"><path d="M2 3H6.5V13H2Z" fill="none" stroke="#4a74a8" stroke-width="1" stroke-dasharray="1.5 1.5"/><path d="M7 4.5H15 M7 11.5H15" fill="none" stroke="#4a74a8" stroke-width="1.5" /><path d="M8.5 1.5L6.5 15" fill="none" stroke="#4a74a8" stroke-width="1.2" /></svg>
<div class="t" style="left:49.0px;top:415.0px;width:400px;height:20px;line-height:20px;text-align:left;transform:scaleX(0.89);transform-origin:0 50%;">ADJUSTMENT2 (B3)</div>
<div style="left:8.0px;top:435.0px;width:291.0px;height:20.0px;background:#cce8ff"></div>
<svg style="left:17px;top:439.5px" width="11" height="11" viewBox="0 0 11 11"><rect x="0.5" y="0.5" width="10" height="10" fill="#fff" stroke="#8a8a8a"/><path d="M2 5.4l2.3 2.6 4.6-5.6" fill="none" stroke="#111" stroke-width="2"/></svg>
<svg style="left:30px;top:437px" width="16" height="16" viewBox="0 0 16 16"><rect x="6.5" y="5.5" width="9" height="5" rx="1" fill="#c9d7ea" stroke="#8aa5cb"/><rect x="1.5" y="4" width="5" height="8" rx="0.8" fill="#fff" stroke="#4a74a8" stroke-width="1.1"/><path d="M1.5 6.7H6.5 M1.5 9.3H6.5" fill="none" stroke="#4a74a8" stroke-width="0.8" /></svg>
<div class="t" style="left:49.0px;top:435.0px;width:400px;height:20px;line-height:20px;text-align:left;transform:scaleX(0.89);transform-origin:0 50%;">BOLTS1</div>
<svg style="left:17px;top:459.5px" width="11" height="11" viewBox="0 0 11 11"><rect x="0.5" y="0.5" width="10" height="10" fill="#fff" stroke="#8a8a8a"/><path d="M2 5.4l2.3 2.6 4.6-5.6" fill="none" stroke="#111" stroke-width="2"/></svg>
<svg style="left:30px;top:457px" width="16" height="16" viewBox="0 0 16 16"><rect x="6.5" y="5.5" width="9" height="5" rx="1" fill="#c9d7ea" stroke="#8aa5cb"/><rect x="1.5" y="4" width="5" height="8" rx="0.8" fill="#fff" stroke="#4a74a8" stroke-width="1.1"/><path d="M1.5 6.7H6.5 M1.5 9.3H6.5" fill="none" stroke="#4a74a8" stroke-width="0.8" /></svg>
<div class="t" style="left:49.0px;top:455.0px;width:400px;height:20px;line-height:20px;text-align:left;transform:scaleX(0.89);transform-origin:0 50%;">BOLTS2</div>
<div class="panel" style="left:307.0px;top:191.0px;width:557.0px;height:80.0px;"></div>
<div class="t" style="left:319.3px;top:207.0px;width:400px;height:20px;line-height:20px;text-align:left;transform:scaleX(0.99);transform-origin:0 50%;">Element</div>
<div class="t" style="left:319.3px;top:239.5px;width:400px;height:20px;line-height:20px;text-align:left;transform:scaleX(0.99);transform-origin:0 50%;">Bolt to</div>
<div class="combo" style="left:606.7px;top:204.2px;width:74.3px;height:24.9px;"></div>
<svg style="left:666.5px;top:214.4px" width="9" height="6" viewBox="0 0 9 6"><path d="M0.6 0.8l3.9 3.9 3.9-3.9" fill="none" stroke="#444" stroke-width="1.1"/></svg>
<div class="t" style="left:612.7px;top:206.6px;width:400px;height:20px;line-height:20px;text-align:left;transform:scaleX(0.95);transform-origin:0 50%;">Section</div>
<div class="combo" style="left:686.4px;top:204.2px;width:67.7px;height:24.9px;"></div>
<svg style="left:739.6px;top:214.4px" width="9" height="6" viewBox="0 0 9 6"><path d="M0.6 0.8l3.9 3.9 3.9-3.9" fill="none" stroke="#444" stroke-width="1.1"/></svg>
<div class="t" style="left:692.4px;top:206.6px;width:400px;height:20px;line-height:20px;text-align:left;transform:scaleX(0.95);transform-origin:0 50%;">B2</div>
<div class="combo" style="left:759.4px;top:204.2px;width:91.6px;height:24.9px;"></div>
<svg style="left:836.5px;top:214.4px" width="9" height="6" viewBox="0 0 9 6"><path d="M0.6 0.8l3.9 3.9 3.9-3.9" fill="none" stroke="#444" stroke-width="1.1"/></svg>
<div class="t" style="left:765.4px;top:206.6px;width:400px;height:20px;line-height:20px;text-align:left;transform:scaleX(0.95);transform-origin:0 50%;">Web</div>
<div class="combo" style="left:696.5px;top:234.8px;width:74.1px;height:25.4px;"></div>
<svg style="left:756.1px;top:245.3px" width="9" height="6" viewBox="0 0 9 6"><path d="M0.6 0.8l3.9 3.9 3.9-3.9" fill="none" stroke="#444" stroke-width="1.1"/></svg>
<div class="t" style="left:702.5px;top:238.3px;width:400px;height:20px;line-height:20px;text-align:left;transform:scaleX(0.95);transform-origin:0 50%;">Plate</div>
<div class="combo" style="left:776.6px;top:234.8px;width:74.4px;height:25.4px;"></div>
<svg style="left:836.5px;top:245.3px" width="9" height="6" viewBox="0 0 9 6"><path d="M0.6 0.8l3.9 3.9 3.9-3.9" fill="none" stroke="#444" stroke-width="1.1"/></svg>
<div class="t" style="left:782.6px;top:238.3px;width:400px;height:20px;line-height:20px;text-align:left;transform:scaleX(0.95);transform-origin:0 50%;">PLATE1</div>
<div style="left:303.5px;top:184.0px;width:565.0px;height:97.0px;border:3px solid #cc2a3c;border-radius:2px"></div>
<div class="panel" style="left:307.0px;top:281.5px;width:557.0px;height:192.5px;"></div>
<div class="t" style="left:319.3px;top:295.0px;width:400px;height:20px;line-height:20px;text-align:left;transform:scaleX(0.99);transform-origin:0 50%;">Category</div>
<div class="t" style="left:319.3px;top:327.0px;width:400px;height:20px;line-height:20px;text-align:left;transform:scaleX(0.99);transform-origin:0 50%;">Type</div>
<div class="t" style="left:319.3px;top:358.0px;width:400px;height:20px;line-height:20px;text-align:left;transform:scaleX(0.99);transform-origin:0 50%;">Material</div>
<div class="t" style="left:319.3px;top:389.5px;width:400px;height:20px;line-height:20px;text-align:left;transform:scaleX(0.99);transform-origin:0 50%;">Place of execution</div>
<div class="t" style="left:319.3px;top:441.0px;width:400px;height:20px;line-height:20px;text-align:left;transform:scaleX(0.99);transform-origin:0 50%;">Hole</div>
<div style="left:320.5px;top:418.5px;width:12.0px;height:12.0px;background:#fff;border:1px solid #333"></div>
<div class="t" style="left:335.0px;top:415.0px;width:400px;height:20px;line-height:20px;text-align:left;transform:scaleX(0.96);transform-origin:0 50%;">Reverse direction</div>
<div class="combo" style="left:733.9px;top:292.5px;width:117.1px;height:24.2px;"></div>
<svg style="left:836.5px;top:302.4px" width="9" height="6" viewBox="0 0 9 6"><path d="M0.6 0.8l3.9 3.9 3.9-3.9" fill="none" stroke="#444" stroke-width="1.1"/></svg>
<div class="t" style="left:739.9px;top:294.6px;width:400px;height:20px;line-height:20px;text-align:left;transform:scaleX(0.95);transform-origin:0 50%;">Prestressed</div>
<div class="combo" style="left:656.0px;top:323.4px;width:94.0px;height:24.6px;"></div>
<svg style="left:735.5px;top:333.5px" width="9" height="6" viewBox="0 0 9 6"><path d="M0.6 0.8l3.9 3.9 3.9-3.9" fill="none" stroke="#444" stroke-width="1.1"/></svg>
<div class="t" style="left:662.0px;top:326.5px;width:400px;height:20px;line-height:20px;text-align:left;transform:scaleX(0.95);transform-origin:0 50%;">EN 14399-3</div>
<div class="combo" style="left:756.4px;top:323.4px;width:66.6px;height:24.6px;"></div>
<svg style="left:808.5px;top:333.5px" width="9" height="6" viewBox="0 0 9 6"><path d="M0.6 0.8l3.9 3.9 3.9-3.9" fill="none" stroke="#444" stroke-width="1.1"/></svg>
<div class="t" style="left:762.4px;top:326.5px;width:400px;height:20px;line-height:20px;text-align:left;transform:scaleX(0.95);transform-origin:0 50%;">12</div>
<div class="combo" style="left:756.4px;top:355.0px;width:66.6px;height:23.6px;"></div>
<svg style="left:808.5px;top:364.6px" width="9" height="6" viewBox="0 0 9 6"><path d="M0.6 0.8l3.9 3.9 3.9-3.9" fill="none" stroke="#444" stroke-width="1.1"/></svg>
<div class="t" style="left:762.4px;top:356.8px;width:400px;height:20px;line-height:20px;text-align:left;transform:scaleX(0.95);transform-origin:0 50%;">4.6</div>
<div class="combo" style="left:748.9px;top:385.0px;width:102.1px;height:24.7px;"></div>
<svg style="left:836.5px;top:395.2px" width="9" height="6" viewBox="0 0 9 6"><path d="M0.6 0.8l3.9 3.9 3.9-3.9" fill="none" stroke="#444" stroke-width="1.1"/></svg>
<div class="t" style="left:754.9px;top:388.8px;width:400px;height:20px;line-height:20px;text-align:left;transform:scaleX(0.95);transform-origin:0 50%;">On site</div>
<div class="combo" style="left:637.9px;top:438.0px;width:115.7px;height:26.3px;"></div>
<svg style="left:739.1px;top:448.9px" width="9" height="6" viewBox="0 0 9 6"><path d="M0.6 0.8l3.9 3.9 3.9-3.9" fill="none" stroke="#444" stroke-width="1.1"/></svg>
<svg style="left:648.9px;top:445.1px" width="12" height="12"><circle cx="6" cy="6" r="5.3" fill="#1f4e8c"/></svg>
<div class="t" style="left:672.9px;top:441.1px;width:400px;height:20px;line-height:20px;text-align:left;transform:scaleX(0.95);transform-origin:0 50%;">Circular</div>
<div class="inp" style="left:759.8px;top:438.0px;width:63.2px;height:22.7px;"></div>
<div class="t" style="left:757.0px;top:439.4px;width:60px;height:20px;line-height:20px;text-align:right;transform:scaleX(0.93);transform-origin:100% 50%;">2.0</div>
<div class="t" style="left:829.5px;top:440.5px;width:400px;height:20px;line-height:20px;text-align:left;transform:scaleX(0.93);transform-origin:0 50%;">mm</div>
<svg style="left:830.8px;top:326.5px" width="18" height="18" viewBox="0 0 18 18"><circle cx="9" cy="9" r="7.6" fill="#fff" stroke="#444" stroke-width="1.3"/><path d="M7 7.5h2.6v5.2 M6.6 12.9h5" fill="none" stroke="#333" stroke-width="1.5"/><circle cx="9" cy="5" r="1.1" fill="#333"/></svg>
<svg style="left:830.8px;top:357.8px" width="18" height="18" viewBox="0 0 18 18"><circle cx="9" cy="9" r="7.6" fill="#fff" stroke="#444" stroke-width="1.3"/><path d="M7 7.5h2.6v5.2 M6.6 12.9h5" fill="none" stroke="#333" stroke-width="1.5"/><circle cx="9" cy="5" r="1.1" fill="#333"/></svg>
<div class="panel" style="left:307.0px;top:484.3px;width:557.0px;height:508.2px;"></div>
<div class="t" style="left:319.3px;top:498.0px;width:400px;height:20px;line-height:20px;text-align:left;transform:scaleX(0.99);transform-origin:0 50%;">Origin: X / Y / Angle</div>
<div class="t" style="left:319.3px;top:536.5px;width:400px;height:20px;line-height:20px;text-align:left;transform:scaleX(0.99);transform-origin:0 50%;">Layout</div>
<div class="inp" style="left:594.6px;top:496.0px;width:63.4px;height:23.0px;"></div>
<div class="t" style="left:592.0px;top:497.5px;width:60px;height:20px;line-height:20px;text-align:right;transform:scaleX(0.93);transform-origin:100% 50%;">0.0</div>
<div class="inp" style="left:671.6px;top:496.0px;width:63.2px;height:23.0px;"></div>
<div class="t" style="left:668.8px;top:497.5px;width:60px;height:20px;line-height:20px;text-align:right;transform:scaleX(0.93);transform-origin:100% 50%;">0.0</div>
<div class="t" style="left:741.0px;top:499.0px;width:400px;height:20px;line-height:20px;text-align:left;transform:scaleX(0.93);transform-origin:0 50%;">mm</div>
<div class="inp" style="left:776.6px;top:496.0px;width:63.2px;height:23.0px;"></div>
<div class="t" style="left:773.8px;top:497.5px;width:60px;height:20px;line-height:20px;text-align:right;transform:scaleX(0.93);transform-origin:100% 50%;">0.0</div>
<div class="t" style="left:846.0px;top:498.0px;width:400px;height:20px;line-height:20px;text-align:left;transform:scaleX(0.99);transform-origin:0 50%;">°</div>
<div class="combo" style="left:628.0px;top:533.2px;width:191.2px;height:25.0px;"></div>
<svg style="left:804.7px;top:543.5px" width="9" height="6" viewBox="0 0 9 6"><path d="M0.6 0.8l3.9 3.9 3.9-3.9" fill="none" stroke="#444" stroke-width="1.1"/></svg>
<div class="t" style="left:634.0px;top:535.7px;width:400px;height:20px;line-height:20px;text-align:left;transform:scaleX(0.95);transform-origin:0 50%;">By coordinates</div>
<svg style="left:319.4px;top:574.4px" width="16" height="16" viewBox="0 0 16 16"><path d="M8 1V15 M1 8H15" fill="none" stroke="#222" stroke-width="2.2" /></svg>
<svg style="left:342.6px;top:574.4px" width="16" height="16" viewBox="0 0 16 16"><rect x="5.5" y="1.5" width="9" height="9" fill="#f4f4f4" stroke="#b0b0b0"/><rect x="1.5" y="5.5" width="9" height="9" fill="#c9c9c9" stroke="#a8a8a8"/></svg>
<svg style="left:366.0px;top:574.4px" width="16" height="16" viewBox="0 0 16 16"><path d="M2 2L14 14 M14 2L2 14" fill="none" stroke="#d83a3a" stroke-width="2.6" /></svg>
<svg style="left:397.0px;top:574.4px" width="16" height="16" viewBox="0 0 16 16"><path d="M8 4L14.5 11.5H1.5Z" fill="#222"/></svg>
<svg style="left:420.2px;top:574.4px" width="16" height="16" viewBox="0 0 16 16"><path d="M8 12L14.5 4.5H1.5Z" fill="#222"/></svg>
<svg style="left:450.8px;top:574.4px" width="16" height="16" viewBox="0 0 16 16"><path d="M2.5 3.5H13.5L12.5 15H3.5Z" fill="#cfd6dd" stroke="#8d98a5"/><rect x="2" y="1.5" width="12" height="2.5" fill="#aeb8c4"/><path d="M5.5 9A2.6 2.6 0 1 1 8 11.6" fill="none" stroke="#2a6fd6" stroke-width="1.5"/><path d="M8 9.8L6.2 11.8L8.4 13" fill="#2a6fd6"/></svg>
<div style="left:388.5px;top:573.0px;width:1.5px;height:19.0px;background:#b8b8b8"></div>
<div style="left:442.5px;top:573.0px;width:1.5px;height:19.0px;background:#b8b8b8"></div>
<div style="left:316.0px;top:595.0px;width:539.0px;height:388.4px;background:#fff;border:1px solid #c4c4c4"></div>
<div style="left:317.0px;top:596.0px;width:537.0px;height:22.5px;background:#f0f0f0;border-bottom:1px solid #dcdcdc"></div>
<div style="left:342.0px;top:596.0px;width:1.0px;height:22.5px;background:#dcdcdc"></div>
<div style="left:596.0px;top:596.0px;width:1.0px;height:22.5px;background:#dcdcdc"></div>
<div class="t" style="left:419.0px;top:598.0px;width:100px;height:20px;line-height:20px;text-align:center;transform:scaleX(0.93);transform-origin:50% 50%;">X (mm)</div>
<div class="t" style="left:675.0px;top:598.0px;width:100px;height:20px;line-height:20px;text-align:center;transform:scaleX(0.93);transform-origin:50% 50%;">Y (mm)</div>
<div style="left:318.5px;top:618.5px;width:23.5px;height:20.1px;background:#ffffc8;border-bottom:1px solid #ececc8"></div>
<div class="t" style="left:316.8px;top:618.5px;width:20px;height:20px;line-height:20px;text-align:right;transform:scaleX(1);transform-origin:100% 50%;color:#111">1</div>
<div style="left:342.0px;top:618.5px;width:254.5px;height:19.6px;background:#4a98e0"></div>
<div style="left:596.5px;top:618.5px;width:257.0px;height:19.6px;background:#cce8ff"></div>
<div class="t" style="left:419.0px;top:618.5px;width:100px;height:20px;line-height:20px;text-align:center;transform:scaleX(0.93);transform-origin:50% 50%;color:#fff">280.0</div>
<div class="t" style="left:675.0px;top:618.5px;width:100px;height:20px;line-height:20px;text-align:center;transform:scaleX(0.93);transform-origin:50% 50%;">30.0</div>
<div style="left:318.5px;top:638.6px;width:23.5px;height:20.1px;background:#ffffc8;border-bottom:1px solid #ececc8"></div>
<div class="t" style="left:316.8px;top:638.6px;width:20px;height:20px;line-height:20px;text-align:right;transform:scaleX(1);transform-origin:100% 50%;color:#111">2</div>
<div style="left:342.0px;top:658.2px;width:512.0px;height:1.0px;background:#ececec"></div>
<div style="left:596.0px;top:638.6px;width:1.0px;height:20.0px;background:#ececec"></div>
<div class="t" style="left:419.0px;top:638.6px;width:100px;height:20px;line-height:20px;text-align:center;transform:scaleX(0.93);transform-origin:50% 50%;">280.0</div>
<div class="t" style="left:675.0px;top:638.6px;width:100px;height:20px;line-height:20px;text-align:center;transform:scaleX(0.93);transform-origin:50% 50%;">-30.0</div>
<div style="left:318.5px;top:658.7px;width:23.5px;height:20.1px;background:#ffffc8;border-bottom:1px solid #ececc8"></div>
<div class="t" style="left:316.8px;top:658.7px;width:20px;height:20px;line-height:20px;text-align:right;transform:scaleX(1);transform-origin:100% 50%;color:#111">3</div>
<div style="left:342.0px;top:678.3px;width:512.0px;height:1.0px;background:#ececec"></div>
<div style="left:596.0px;top:658.7px;width:1.0px;height:20.0px;background:#ececec"></div>
<div class="t" style="left:419.0px;top:658.7px;width:100px;height:20px;line-height:20px;text-align:center;transform:scaleX(0.93);transform-origin:50% 50%;">340.0</div>
<div class="t" style="left:675.0px;top:658.7px;width:100px;height:20px;line-height:20px;text-align:center;transform:scaleX(0.93);transform-origin:50% 50%;">30.0</div>
<div style="left:318.5px;top:678.8px;width:23.5px;height:20.1px;background:#ffffc8;border-bottom:1px solid #ececc8"></div>
<div class="t" style="left:316.8px;top:678.8px;width:20px;height:20px;line-height:20px;text-align:right;transform:scaleX(1);transform-origin:100% 50%;color:#111">4</div>
<div style="left:342.0px;top:698.4px;width:512.0px;height:1.0px;background:#ececec"></div>
<div style="left:596.0px;top:678.8px;width:1.0px;height:20.0px;background:#ececec"></div>
<div class="t" style="left:419.0px;top:678.8px;width:100px;height:20px;line-height:20px;text-align:center;transform:scaleX(0.93);transform-origin:50% 50%;">340.0</div>
<div class="t" style="left:675.0px;top:678.8px;width:100px;height:20px;line-height:20px;text-align:center;transform:scaleX(0.93);transform-origin:50% 50%;">-30.0</div>
<div style="left:301.6px;top:571.0px;width:2.0px;height:2.0px;background:#b4b4b4"></div>
<div style="left:301.6px;top:576.0px;width:2.0px;height:2.0px;background:#b4b4b4"></div>
<div style="left:301.6px;top:581.0px;width:2.0px;height:2.0px;background:#b4b4b4"></div>
<div style="left:301.6px;top:586.0px;width:2.0px;height:2.0px;background:#b4b4b4"></div>
<div style="left:301.6px;top:591.0px;width:2.0px;height:2.0px;background:#b4b4b4"></div>
<div style="left:866.4px;top:571.0px;width:2.0px;height:2.0px;background:#b4b4b4"></div>
<div style="left:866.4px;top:576.0px;width:2.0px;height:2.0px;background:#b4b4b4"></div>
<div style="left:866.4px;top:581.0px;width:2.0px;height:2.0px;background:#b4b4b4"></div>
<div style="left:866.4px;top:586.0px;width:2.0px;height:2.0px;background:#b4b4b4"></div>
<div style="left:866.4px;top:591.0px;width:2.0px;height:2.0px;background:#b4b4b4"></div>
<div style="left:871.0px;top:187.4px;width:1049.0px;height:812.6px;background:#fff"></div>
<svg style="left:871px;top:187.4px" width="1049" height="812.6" viewBox="464.533 99.947 559.467 433.387"><defs><linearGradient id="gTop" gradientUnits="userSpaceOnUse" x1="712" y1="157.6" x2="710.0" y2="168.6"><stop offset="0" stop-color="#c96a68"/><stop offset="0.25" stop-color="#ca6b69"/><stop offset="1" stop-color="#ba5e5c" stop-opacity="0"/></linearGradient><linearGradient id="gBot" gradientUnits="userSpaceOnUse" x1="712" y1="272.2" x2="710.35" y2="281.2"><stop offset="0" stop-color="#ba5e5c" stop-opacity="0"/><stop offset="1" stop-color="#c26462"/></linearGradient><linearGradient id="gB3" gradientUnits="userSpaceOnUse" x1="692.5" y1="421" x2="697" y2="423.5"><stop offset="0" stop-color="#ba5e5c"/><stop offset="1" stop-color="#8a4443"/></linearGradient><linearGradient id="gB2" gradientUnits="userSpaceOnUse" x1="880" y1="418" x2="888" y2="414.5"><stop offset="0" stop-color="#ba5e5c"/><stop offset="0.6" stop-color="#d06f6d"/><stop offset="1" stop-color="#c46664"/></linearGradient></defs><polygon points="569.60,260.00 977.50,335.50 940.50,358.75 532.10,283.10" fill="#793a39" /><polygon points="596.00,283.30 913.30,341.50 913.30,440.00 880.00,480.00 811.00,465.50 701.00,445.00 650.00,412.00 596.00,366.00" fill="#70808f" /><polygon points="592.10,283.10 596.00,279.60 596.00,366.00 592.10,363.20" fill="#56646f" /><polygon points="592.10,363.20 596.00,366.00 650.00,412.00 648.00,414.50 610.60,381.00" fill="#56646f" /><polygon points="701.00,445.00 811.00,465.50 825.00,454.00 826.00,456.50 811.50,468.00 700.00,447.50" fill="#44505a" /><polygon points="596.00,279.60 913.30,338.00 913.30,341.60 596.00,283.40" fill="#cfc591" /><line x1="596.00" y1="279.60" x2="913.30" y2="338.00" stroke="#8a845e" stroke-width="0.4" /><text transform="matrix(0.8,0.149,0,1,705,371.6)" font-family="Liberation Sans, sans-serif" font-size="30.3" fill="#151515" letter-spacing="3.4">PLATE1</text><polygon points="549.60,135.00 551.00,128.00 569.60,116.00 977.30,192.00 961.00,203.74 959.80,211.00 959.80,329.76 569.60,258.00 556.00,262.00 549.60,268.00" fill="#ba5e5c" /><polygon points="555.00,128.32 961.00,202.74 959.80,214.74 552.00,140.32" fill="url(#gTop)" /><polygon points="569.60,255.00 959.80,326.76 959.80,317.76 560.00,247.50" fill="url(#gBot)" /><polygon points="569.60,116.00 977.30,192.00 977.30,195.20 962.50,204.50 961.00,203.74 555.00,129.32 556.00,126.50" fill="#793a39" /><polygon points="569.60,113.75 977.30,190.00 977.30,195.20 569.60,118.80" fill="#bf615f" /><line x1="569.60" y1="113.90" x2="977.30" y2="190.10" stroke="#8a4544" stroke-width="0.5" /><line x1="569.60" y1="118.80" x2="977.30" y2="195.20" stroke="#5e2c2b" stroke-width="0.5" /><polygon points="569.60,113.75 532.10,136.90 532.10,141.90 549.60,145.00 549.60,135.00 551.00,130.50 556.00,126.50 569.60,118.80" fill="#a85453" /><polygon points="569.60,113.75 532.10,136.90 532.10,139.60 569.60,116.60" fill="#b65b59" /><line x1="569.60" y1="113.75" x2="532.10" y2="136.90" stroke="#7c3d3c" stroke-width="0.5" /><polygon points="549.60,135.00 551.00,130.50 552.60,133.00 552.60,262.00 549.60,268.00" fill="#9a4b4a" /><polygon points="569.60,255.00 556.00,262.00 549.60,268.00 532.10,278.10 532.10,283.10 569.60,260.00" fill="#b65b59" /><line x1="532.10" y1="278.30" x2="549.60" y2="267.60" stroke="#7c3d3c" stroke-width="0.4" /><polygon points="569.60,258.00 977.50,333.00 977.50,335.50 940.50,358.75 913.30,353.70 913.30,338.00 596.00,279.60 592.10,283.10 592.10,294.20 532.10,283.10" fill="#793a39" /><polygon points="569.60,255.00 977.50,330.00 977.50,335.50 569.60,260.00" fill="#bf615f" /><line x1="569.60" y1="255.10" x2="977.50" y2="330.10" stroke="#8a4544" stroke-width="0.5" /><line x1="569.60" y1="260.00" x2="977.50" y2="335.50" stroke="#5e2c2b" stroke-width="0.5" /><text transform="matrix(0.72,0.135,0,1,626.8,224.9)" font-family="Liberation Sans, sans-serif" font-size="54" fill="#151515" letter-spacing="9">B1</text><text transform="matrix(0.72,0.135,0,1,830.7,263.2)" font-family="Liberation Sans, sans-serif" font-size="54" fill="#151515" letter-spacing="9">B1</text><line x1="756.10" y1="235.30" x2="717.00" y2="252.10" stroke="#58b82e" stroke-width="0.6" /><polygon points="718.20,251.60 725.40,246.60 726.90,250.00" fill="#20b820" /><line x1="756.10" y1="235.30" x2="778.80" y2="281.10" stroke="#e02222" stroke-width="0.6" /><polygon points="778.90,281.30 772.90,273.40 776.20,271.70" fill="#d01414" /><text x="713.3" y="254.6" font-family="Liberation Sans, sans-serif" font-size="3.4" fill="#58b82e" text-anchor="middle">Y</text><text x="781.4" y="286.6" font-family="Liberation Sans, sans-serif" font-size="3.4" fill="#e02222" text-anchor="middle">X</text><polygon points="579.30,432.40 659.40,300.00 677.50,288.10 681.90,290.60 671.50,309.40 733.75,356.90 752.50,347.50 756.90,350.60 678.30,484.60 657.20,495.70" fill="#b45a58" stroke="#6a3231" stroke-width="0.5" stroke-linejoin="round"/><polygon points="671.50,309.40 733.75,356.90 658.50,487.00 655.80,490.20 589.50,436.40 588.30,433.20 606.50,425.40 609.00,425.50" fill="#ba5e5c" /><polygon points="579.30,432.40 659.40,300.00 677.50,288.10 601.20,421.70" fill="#793a39" /><polygon points="601.20,421.70 677.50,288.10 681.90,290.60 609.00,425.50 605.00,424.30" fill="#bf615f" /><line x1="681.90" y1="290.60" x2="609.00" y2="425.50" stroke="#7c3d3c" stroke-width="0.45" /><polygon points="729.50,358.30 734.75,356.40 659.40,489.00 655.00,487.60" fill="url(#gB3)" /><polygon points="734.75,356.40 752.50,347.50 675.80,481.40 659.40,489.00 656.40,490.30" fill="#793a39" /><polygon points="752.50,347.50 756.90,350.60 678.30,484.60 675.80,481.40" fill="#bf615f" /><line x1="752.50" y1="347.50" x2="675.80" y2="481.40" stroke="#6a3231" stroke-width="0.4" /><polygon points="687.74,333.91 683.67,339.31 677.14,338.36 674.66,331.99 678.73,326.59 685.26,327.54" fill="#474e58" /><polygon points="689.04,332.21 684.97,337.61 678.44,336.66 675.96,330.29 680.03,324.89 686.56,325.84" fill="#6a737f" stroke="#5a6570" stroke-width="0.4"/><polygon points="674.44,356.56 670.37,361.96 663.84,361.01 661.36,354.64 665.43,349.24 671.96,350.19" fill="#474e58" /><polygon points="675.74,354.86 671.67,360.26 665.14,359.31 662.66,352.94 666.73,347.54 673.26,348.49" fill="#6a737f" stroke="#5a6570" stroke-width="0.4"/><polygon points="711.49,352.66 707.42,358.06 700.89,357.11 698.41,350.74 702.48,345.34 709.01,346.29" fill="#474e58" /><polygon points="712.79,350.96 708.72,356.36 702.19,355.41 699.71,349.04 703.78,343.64 710.31,344.59" fill="#6a737f" stroke="#5a6570" stroke-width="0.4"/><polygon points="697.74,375.16 693.67,380.56 687.14,379.61 684.66,373.24 688.73,367.84 695.26,368.79" fill="#474e58" /><polygon points="699.04,373.46 694.97,378.86 688.44,377.91 685.96,371.54 690.03,366.14 696.56,367.09" fill="#6a737f" stroke="#5a6570" stroke-width="0.4"/><text transform="matrix(0.41,-0.71,0.777,0.63,656.8,419.6)" font-family="Liberation Sans, sans-serif" font-size="37.5" fill="#151515">B3</text><polygon points="798.75,358.75 853.75,335.00 926.75,496.25 875.50,517.50" fill="#ba5e5c" /><polygon points="846.50,338.20 853.75,335.00 926.75,496.25 919.50,499.30" fill="url(#gB2)" /><polygon points="772.50,370.50 794.00,357.40 871.00,520.40 851.75,531.25" fill="#964848" /><polygon points="794.00,357.40 796.30,355.80 798.75,358.75 875.50,517.50 871.00,520.40" fill="#c06260" /><line x1="798.75" y1="358.75" x2="875.50" y2="517.50" stroke="#7c3d3c" stroke-width="0.45" /><polygon points="853.75,335.00 866.25,326.25 945.50,487.50 926.75,496.25" fill="#964848" /><polygon points="866.25,326.25 870.00,324.50 949.25,486.25 945.50,487.50" fill="#c06260" /><polygon points="838.30,361.19 834.80,367.01 828.20,366.77 825.10,360.71 828.60,354.89 835.20,355.13" fill="#474e58" /><polygon points="839.60,359.49 836.10,365.31 829.50,365.07 826.40,359.01 829.90,353.19 836.50,353.43" fill="#6a737f" stroke="#5a6570" stroke-width="0.4"/><polygon points="814.55,371.19 811.05,377.01 804.45,376.77 801.35,370.71 804.85,364.89 811.45,365.13" fill="#474e58" /><polygon points="815.85,369.49 812.35,375.31 805.75,375.07 802.65,369.01 806.15,363.19 812.75,363.43" fill="#6a737f" stroke="#5a6570" stroke-width="0.4"/><polygon points="852.05,388.69 848.55,394.51 841.95,394.27 838.85,388.21 842.35,382.39 848.95,382.63" fill="#474e58" /><polygon points="853.35,386.99 849.85,392.81 843.25,392.57 840.15,386.51 843.65,380.69 850.25,380.93" fill="#6a737f" stroke="#5a6570" stroke-width="0.4"/><polygon points="828.30,398.69 824.80,404.51 818.20,404.27 815.10,398.21 818.60,392.39 825.20,392.63" fill="#474e58" /><polygon points="829.60,396.99 826.10,402.81 819.50,402.57 816.40,396.51 819.90,390.69 826.50,390.93" fill="#6a737f" stroke="#5a6570" stroke-width="0.4"/><text transform="matrix(0.493,0.995,-0.918,0.397,836.4,416.8)" font-family="Liberation Sans, sans-serif" font-size="30.4" fill="#151515">B2</text><line x1="501.80" y1="511.60" x2="501.80" y2="493.00" stroke="#1010d0" stroke-width="0.9" /><polygon points="501.80,489.60 499.80,495.60 503.80,495.60" fill="#1010d0" /><line x1="501.80" y1="511.60" x2="485.00" y2="508.80" stroke="#e02020" stroke-width="0.9" /><polygon points="481.00,508.00 486.60,506.60 485.90,510.80" fill="#e02020" /><line x1="501.80" y1="511.60" x2="510.00" y2="507.00" stroke="#207020" stroke-width="0.9" /><polygon points="513.40,504.80 508.20,505.20 510.20,509.00" fill="#1e6a1e" /><text x="501.8" y="486.8" font-family="Liberation Sans, sans-serif" font-size="6.6" font-weight="bold" text-anchor="middle" fill="#1010d0">Z</text><text x="476.7" y="508.8" font-family="Liberation Sans, sans-serif" font-size="6.6" font-weight="bold" text-anchor="middle" fill="#e02020">X</text><text x="515.6" y="504.8" font-family="Liberation Sans, sans-serif" font-size="6.6" font-weight="bold" text-anchor="middle" fill="#22c022">Y</text></svg>
<svg style="left:1696.0px;top:167px" width="16" height="16" viewBox="0 0 16 16"><path d="M8 1V9 M8 9L2 14 M8 9L14 13" fill="none" stroke="#5b8cae" stroke-width="1.4" /></svg>
<svg style="left:1720.0px;top:167px" width="16" height="16" viewBox="0 0 16 16"><ellipse cx="8" cy="8.5" rx="7" ry="3.8" fill="none" stroke="#222" stroke-width="1.2"/><circle cx="8" cy="7" r="3.8" fill="#111"/><path d="M9 10.5L13 12L10.5 14Z" fill="#111"/></svg>
<svg style="left:1744.4px;top:167px" width="16" height="16" viewBox="0 0 16 16"><ellipse cx="8" cy="10" rx="7" ry="3.6" fill="none" stroke="#222" stroke-width="1.2"/><path d="M8 2V11 M5.5 8L8 3.5L10.5 8Z" fill="#fff" stroke="#222" stroke-width="1.1" /><circle cx="8" cy="2.5" r="1.5" fill="#fff" stroke="#222"/></svg>
<svg style="left:1774.2px;top:167px" width="16" height="16" viewBox="0 0 16 16"><rect x="2.5" y="2" width="5.5" height="12" fill="#a8d4ec" stroke="#333"/><rect x="8" y="2" width="5.5" height="12" fill="#f06a6a" stroke="#333"/></svg>
<svg style="left:1797.8px;top:167px" width="16" height="16" viewBox="0 0 16 16"><rect x="2.5" y="2.5" width="11" height="11" fill="#52d060" stroke="#333"/><path d="M3 13L13 3V13Z" fill="#8ab4e8"/><path d="M1.5 14.5L14.5 1.5" fill="none" stroke="#333" stroke-width="1" /></svg>
<svg style="left:1822.2px;top:167px" width="16" height="16" viewBox="0 0 16 16"><rect x="2.5" y="2" width="11" height="5" fill="#8a80e8" stroke="#333"/><rect x="2.5" y="8" width="11" height="6" fill="#a8d4ec" stroke="#333"/><path d="M1 7.5H15" fill="none" stroke="#333" stroke-width="1.2" /></svg>
<svg style="left:1846.2px;top:167px" width="16" height="16" viewBox="0 0 16 16"><path d="M8 1L14.5 4.5L8 8L1.5 4.5Z" fill="#d88" stroke="#444" stroke-width="0.8"/><path d="M1.5 4.5L8 8V15.5L1.5 12Z" fill="#7ab0d8" stroke="#444" stroke-width="0.8"/><path d="M14.5 4.5L8 8V15.5L14.5 12Z" fill="#8c8" stroke="#444" stroke-width="0.8"/></svg>
<svg style="left:1870.2px;top:167px" width="16" height="16" viewBox="0 0 16 16"><path d="M0.5 8.5Q8 0.5 15.5 8.5Q8 15.5 0.5 8.5Z" fill="#111"/><circle cx="8" cy="8.3" r="2.8" fill="#fff"/><circle cx="8" cy="8.3" r="1.5" fill="#111"/><path d="M13 2L15 1" fill="none" stroke="#111" stroke-width="1" /></svg>
<svg style="left:1900.0px;top:167px" width="16" height="16" viewBox="0 0 16 16"><circle cx="9" cy="9.5" r="5.2" fill="#fff" stroke="#666" stroke-width="1.2"/><path d="M9 7V10.5H11" fill="none" stroke="#666" stroke-width="1" /><path d="M2 2H8 M2 4.5H6" fill="none" stroke="#555" stroke-width="1.2" /><path d="M9 3.5V5 M14 9.5H12.7 M9 15.5V14 M4 9.5H5.3" fill="none" stroke="#666" stroke-width="1" /></svg>
<div style="left:1766.0px;top:166.0px;width:1.5px;height:18.0px;background:#c8c8c8"></div>
<div style="left:1893.0px;top:166.0px;width:1.5px;height:18.0px;background:#c8c8c8"></div>
<div style="left:0.0px;top:1000.0px;width:1920.0px;height:41.0px;background:#e8e8e8;border-top:1px solid #e0e0e0"></div>
<div style="left:926.0px;top:1009.0px;width:69.0px;height:24.4px;background:#e1e1e1;border:2px solid #0078d7"></div>
<div class="t" style="left:920.5px;top:1011.2px;width:80px;height:20px;line-height:20px;text-align:center;transform:scaleX(0.95);transform-origin:50% 50%;"><span style="text-decoration:underline">A</span>ccept</div>
</div>
</body></html>
